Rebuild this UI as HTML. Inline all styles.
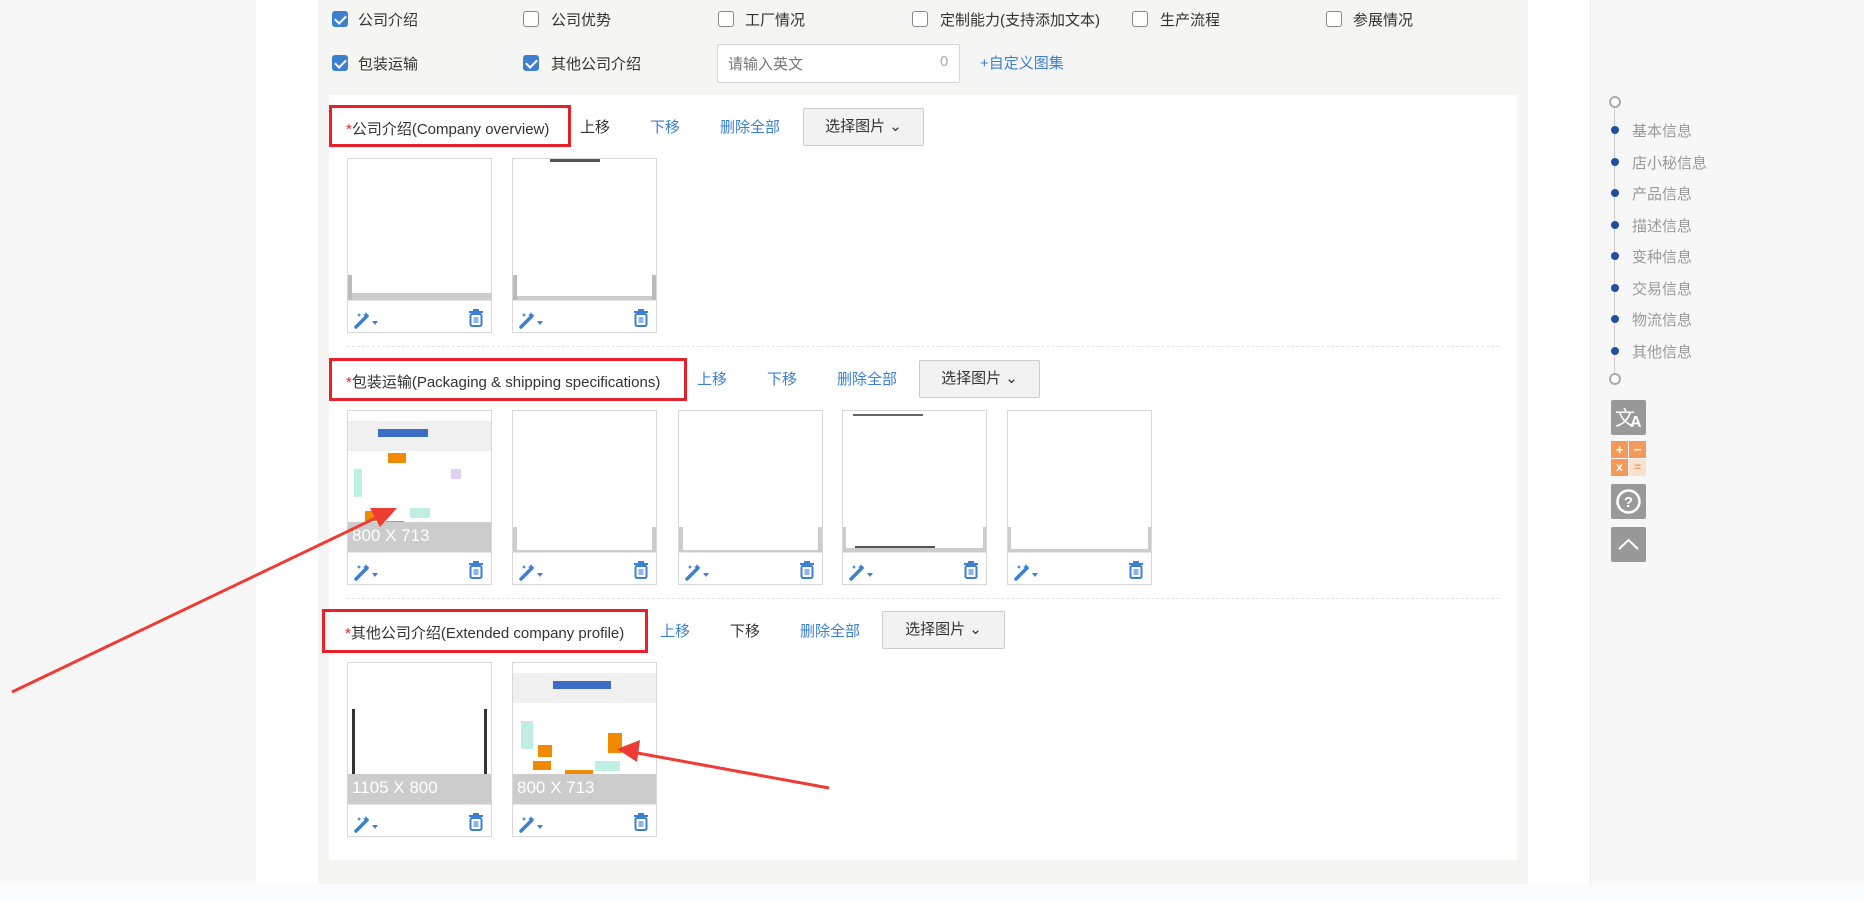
<!DOCTYPE html>
<html><head><meta charset="utf-8"><style>
*{margin:0;padding:0;box-sizing:border-box}
body{width:1864px;height:901px;position:relative;overflow:hidden;background:#f7f7f7;font-family:"Liberation Sans","Noto Sans CJK SC",sans-serif;font-size:15px;color:#333}
.a{position:absolute}
.cb{position:absolute;width:16px;height:16px;border:1px solid #888;border-radius:3px;background:#fff}
.cb.on{background:#3d7fd0;border-color:#3d7fd0}
.cb.on::after{content:"";position:absolute;left:4px;top:1px;width:5px;height:9px;border:solid #fff;border-width:0 2px 2px 0;transform:rotate(45deg)}
.lbl{position:absolute;font-size:15px;color:#333;white-space:nowrap}
.red{position:absolute;border:3px solid #e8202a}
.t{position:absolute;font-size:15px;white-space:nowrap;color:#333}
.blue{color:#3d7fd0}
.btn{position:absolute;border:1px solid #ccc;background:#f2f2f2;font-size:15px;text-align:center;color:#333;border-radius:2px}
.th{position:absolute;width:145px;height:175px;border:1px solid #d8d8d8;background:#fff}
.th .img{position:absolute;left:0;top:0;width:143px;height:141px;background:#fff;overflow:hidden}
.th .bar{position:absolute;left:0;right:0;bottom:0;height:30px;background:#ccc;color:#fff;font-size:17px;padding:4px 4px}
.th .tb{position:absolute;left:0;right:0;bottom:0;height:32px;border-top:1px solid #e6e6e6}
.wand{position:absolute;left:6px;top:8px}
.trash{position:absolute;right:6px;top:7px}
.sep{position:absolute;left:347px;width:1152px;border-top:1px dashed #e4e4e4}
.nav{position:absolute;left:1632px;font-size:15px;color:#999}
.dot{position:absolute;left:1611px;width:8px;height:8px;border-radius:50%;background:#1f4fa0}
.ic{position:absolute;left:1611px;width:35px;height:35px;background:#999;border-radius:2px}
</style></head><body>
<div class="a" style="left:256px;top:0;width:1334px;height:884px;background:#fff"></div>
<div class="a" style="left:318px;top:0;width:1210px;height:884px;background:#f5f5f4"></div>
<div class="a" style="left:1590px;top:0;width:274px;height:884px;background:#f7f7f7;border-left:1px solid #ececec"></div>
<div class="a" style="left:0;top:884px;width:1864px;height:17px;background:#fafbfd"></div>
<div class="a" style="left:329px;top:95px;width:1188px;height:765px;background:#fff"></div>

<!-- checkboxes -->
<div class="cb on" style="left:332px;top:11px"></div><div class="lbl" style="left:358px;top:9px">公司介绍</div>
<div class="cb" style="left:523px;top:11px"></div><div class="lbl" style="left:551px;top:9px">公司优势</div>
<div class="cb" style="left:718px;top:11px"></div><div class="lbl" style="left:745px;top:9px">工厂情况</div>
<div class="cb" style="left:912px;top:11px"></div><div class="lbl" style="left:940px;top:9px">定制能力(支持添加文本)</div>
<div class="cb" style="left:1132px;top:11px"></div><div class="lbl" style="left:1160px;top:9px">生产流程</div>
<div class="cb" style="left:1326px;top:11px"></div><div class="lbl" style="left:1353px;top:9px">参展情况</div>
<div class="cb on" style="left:332px;top:55px"></div><div class="lbl" style="left:358px;top:53px">包装运输</div>
<div class="cb on" style="left:523px;top:55px"></div><div class="lbl" style="left:551px;top:53px">其他公司介绍</div>
<div class="a" style="left:717px;top:44px;width:243px;height:39px;background:#fff;border:1px solid #d6d6d6;border-radius:2px"></div>
<div class="lbl" style="left:728px;top:53px;color:#777">请输入英文</div>
<div class="lbl" style="left:940px;top:53px;color:#aaa">0</div>
<div class="lbl blue" style="left:980px;top:52px">+自定义图集</div>

<!-- section 1 -->
<div class="red" style="left:329px;top:105px;width:242px;height:42px"></div>
<div class="t" style="left:346px;top:118px"><span style="color:#e8202a">*</span>公司介绍(Company overview)</div>
<div class="t" style="left:580px;top:116px">上移</div>
<div class="t blue" style="left:650px;top:116px">下移</div>
<div class="t blue" style="left:720px;top:116px">删除全部</div>
<div class="btn" style="left:803px;top:108px;width:121px;height:38px;line-height:36px">选择图片 ⌄</div>

<!-- section 2 -->
<div class="sep" style="top:346px"></div>
<div class="red" style="left:329px;top:358px;width:358px;height:43px"></div>
<div class="t" style="left:346px;top:371px"><span style="color:#e8202a">*</span>包装运输(Packaging &amp; shipping specifications)</div>
<div class="t blue" style="left:697px;top:368px">上移</div>
<div class="t blue" style="left:767px;top:368px">下移</div>
<div class="t blue" style="left:837px;top:368px">删除全部</div>
<div class="btn" style="left:919px;top:360px;width:121px;height:38px;line-height:36px">选择图片 ⌄</div>

<!-- section 3 -->
<div class="sep" style="top:598px"></div>
<div class="red" style="left:322px;top:609px;width:326px;height:44px"></div>
<div class="t" style="left:345px;top:622px"><span style="color:#e8202a">*</span>其他公司介绍(Extended company profile)</div>
<div class="t blue" style="left:660px;top:620px">上移</div>
<div class="t" style="left:730px;top:620px">下移</div>
<div class="t blue" style="left:800px;top:620px">删除全部</div>
<div class="btn" style="left:882px;top:611px;width:123px;height:38px;line-height:36px">选择图片 ⌄</div>

<svg width="0" height="0" style="position:absolute"><defs>
<g id="w"><path d="M2 18 L13 7" stroke="#3d7fd0" stroke-width="3.5" stroke-linecap="round"/><path d="M12 3l1 2 2 1-2 1-1 2-1-2-2-1 2-1z M5 4l.7 1.3 1.3.7-1.3.7L5 8l-.7-1.3L3 6l1.3-.7z" fill="#3d7fd0"/><path d="M18 12h6l-3 4z" fill="#3d7fd0"/></g>
<g id="tr"><rect x="2" y="3" width="14" height="2" fill="#3d7fd0"/><rect x="6" y="1" width="6" height="2" fill="#3d7fd0"/><rect x="3.5" y="6" width="11" height="12" rx="1.5" fill="none" stroke="#3d7fd0" stroke-width="2"/><rect x="6.5" y="9" width="5" height="6" fill="#8fb5e6"/></g>
</defs></svg>

<!-- thumbnails templates -->
<div id="thumbs"></div>
<script></script>

<div class="th" style="left:347px;top:158px"><div class="img"><div style="position:absolute;left:0;right:0;bottom:0;height:7px;background:#ccc"></div><div style="position:absolute;left:0;bottom:0;width:4px;height:25px;background:#bbb"></div></div><div class="tb"><svg class="wand" width="26" height="20"><use href="#w"/></svg><svg class="trash" width="18" height="20"><use href="#tr"/></svg></div></div>
<div class="th" style="left:512px;top:158px"><div class="img"><div style="position:absolute;left:37px;top:0;width:50px;height:3px;background:#555"></div><div style="position:absolute;left:0;right:0;bottom:0;height:4px;background:#ccc"></div><div style="position:absolute;left:0;bottom:0;width:4px;height:25px;background:#bbb"></div><div style="position:absolute;right:0;bottom:0;width:4px;height:25px;background:#bbb"></div></div><div class="tb"><svg class="wand" width="26" height="20"><use href="#w"/></svg><svg class="trash" width="18" height="20"><use href="#tr"/></svg></div></div>

<div class="th" style="left:347px;top:410px"><div class="img">
<div style="position:absolute;left:0;top:10px;width:143px;height:30px;background:#f0f0f0"></div>
<div style="position:absolute;left:30px;top:18px;width:50px;height:8px;background:#3d6cc8"></div>
<div style="position:absolute;left:40px;top:42px;width:18px;height:10px;background:#f08a00"></div>
<div style="position:absolute;left:6px;top:58px;width:8px;height:28px;background:#bfeee5"></div>
<div style="position:absolute;left:103px;top:58px;width:10px;height:10px;background:#ddd0f5"></div>
<div style="position:absolute;left:17px;top:100px;width:16px;height:10px;background:#f08a00"></div>
<div style="position:absolute;left:38px;top:110px;width:18px;height:10px;background:#f08a00"></div>
<div style="position:absolute;left:62px;top:97px;width:20px;height:10px;background:#bfeee5"></div>
<div class="bar">800 X 713</div></div><div class="tb"><svg class="wand" width="26" height="20"><use href="#w"/></svg><svg class="trash" width="18" height="20"><use href="#tr"/></svg></div></div>
<div class="th" style="left:512px;top:410px"><div class="img"><div style="position:absolute;left:0;right:0;bottom:0;height:2px;background:#ccc"></div><div style="position:absolute;left:0;bottom:0;width:4px;height:25px;background:#ccc"></div><div style="position:absolute;right:0;bottom:0;width:4px;height:25px;background:#ccc"></div></div><div class="tb"><svg class="wand" width="26" height="20"><use href="#w"/></svg><svg class="trash" width="18" height="20"><use href="#tr"/></svg></div></div>
<div class="th" style="left:678px;top:410px"><div class="img"><div style="position:absolute;left:0;right:0;bottom:0;height:2px;background:#ccc"></div><div style="position:absolute;left:0;bottom:0;width:4px;height:25px;background:#ccc"></div><div style="position:absolute;right:0;bottom:0;width:4px;height:25px;background:#ccc"></div></div><div class="tb"><svg class="wand" width="26" height="20"><use href="#w"/></svg><svg class="trash" width="18" height="20"><use href="#tr"/></svg></div></div>
<div class="th" style="left:842px;top:410px"><div class="img"><div style="position:absolute;left:10px;top:3px;width:70px;height:2px;background:#666"></div><div style="position:absolute;left:0;right:0;bottom:0;height:4px;background:#ccc"></div><div style="position:absolute;left:12px;bottom:4px;width:80px;height:2px;background:#555"></div><div style="position:absolute;left:0;bottom:0;width:3px;height:25px;background:#ccc"></div><div style="position:absolute;right:0;bottom:0;width:3px;height:25px;background:#ccc"></div></div><div class="tb"><svg class="wand" width="26" height="20"><use href="#w"/></svg><svg class="trash" width="18" height="20"><use href="#tr"/></svg></div></div>
<div class="th" style="left:1007px;top:410px"><div class="img"><div style="position:absolute;left:0;right:0;bottom:0;height:3px;background:#ccc"></div><div style="position:absolute;left:0;bottom:0;width:3px;height:25px;background:#ccc"></div><div style="position:absolute;right:0;bottom:0;width:3px;height:25px;background:#ccc"></div></div><div class="tb"><svg class="wand" width="26" height="20"><use href="#w"/></svg><svg class="trash" width="18" height="20"><use href="#tr"/></svg></div></div>

<div class="th" style="left:347px;top:662px"><div class="img"><div style="position:absolute;left:4px;top:46px;width:3px;height:70px;background:#333"></div><div style="position:absolute;right:4px;top:46px;width:3px;height:70px;background:#333"></div><div style="position:absolute;left:4px;top:114px;width:135px;height:3px;background:#333"></div><div class="bar">1105 X 800</div></div><div class="tb"><svg class="wand" width="26" height="20"><use href="#w"/></svg><svg class="trash" width="18" height="20"><use href="#tr"/></svg></div></div>
<div class="th" style="left:512px;top:662px"><div class="img">
<div style="position:absolute;left:0;top:10px;width:143px;height:30px;background:#f0f0f0"></div>
<div style="position:absolute;left:40px;top:18px;width:58px;height:8px;background:#3d6cc8"></div>
<div style="position:absolute;left:8px;top:58px;width:12px;height:28px;background:#bfeee5"></div>
<div style="position:absolute;left:25px;top:82px;width:14px;height:12px;background:#f08a00"></div>
<div style="position:absolute;left:20px;top:98px;width:18px;height:9px;background:#f08a00"></div>
<div style="position:absolute;left:52px;top:107px;width:28px;height:10px;background:#f08a00"></div>
<div style="position:absolute;left:95px;top:70px;width:14px;height:20px;background:#f08a00"></div>
<div style="position:absolute;left:82px;top:98px;width:25px;height:10px;background:#bfeee5"></div>
<div class="bar">800 X 713</div></div><div class="tb"><svg class="wand" width="26" height="20"><use href="#w"/></svg><svg class="trash" width="18" height="20"><use href="#tr"/></svg></div></div>

<!-- sidebar -->
<div class="a" style="left:1614px;top:102px;width:1px;height:278px;background:#ccc"></div>
<div class="a" style="left:1609px;top:96px;width:12px;height:12px;border:2px solid #aaa;border-radius:50%;background:#fff"></div>
<div class="a" style="left:1609px;top:373px;width:12px;height:12px;border:2px solid #aaa;border-radius:50%;background:#fff"></div>
<div class="dot" style="top:126px"></div><div class="nav" style="top:120px">基本信息</div>
<div class="dot" style="top:158px"></div><div class="nav" style="top:152px">店小秘信息</div>
<div class="dot" style="top:189px"></div><div class="nav" style="top:183px">产品信息</div>
<div class="dot" style="top:221px"></div><div class="nav" style="top:215px">描述信息</div>
<div class="dot" style="top:252px"></div><div class="nav" style="top:246px">变种信息</div>
<div class="dot" style="top:284px"></div><div class="nav" style="top:278px">交易信息</div>
<div class="dot" style="top:315px"></div><div class="nav" style="top:309px">物流信息</div>
<div class="dot" style="top:347px"></div><div class="nav" style="top:341px">其他信息</div>
<div class="ic" style="top:400px;color:#fff"><span style="position:absolute;left:4px;top:2px;font-size:20px">文</span><span style="position:absolute;left:19px;top:14px;font-size:16px;font-weight:bold">A</span></div>
<div class="a" style="left:1611px;top:441px;width:35px;height:35px">
<div class="a" style="left:0;top:0;width:17px;height:17px;background:#f39a5a;color:#fff;font-size:13px;text-align:center;line-height:17px;font-weight:bold">+</div>
<div class="a" style="left:18px;top:0;width:17px;height:17px;background:#f39a5a;color:#fff;font-size:13px;text-align:center;line-height:17px;font-weight:bold">−</div>
<div class="a" style="left:0;top:18px;width:17px;height:17px;background:#f39a5a;color:#fff;font-size:12px;text-align:center;line-height:17px;font-weight:bold">x</div>
<div class="a" style="left:18px;top:18px;width:17px;height:17px;background:#fbe2cf;color:#f39a5a;font-size:12px;text-align:center;line-height:17px;font-weight:bold">=</div></div>
<div class="ic" style="top:484px"><svg width="35" height="35"><circle cx="17.5" cy="17.5" r="11" fill="none" stroke="#fff" stroke-width="2.5"/><text x="17.5" y="23" text-anchor="middle" font-size="15" font-weight="bold" fill="#fff" font-family="Liberation Sans">?</text></svg></div>
<div class="ic" style="top:527px"><svg width="35" height="35"><path d="M8 22 L17.5 13 L27 22" fill="none" stroke="#fff" stroke-width="2"/></svg></div>

<!-- red arrows -->
<svg class="a" style="left:0;top:0" width="1864" height="901">
<path d="M12 692 L382 515" stroke="#ee3b33" stroke-width="3" fill="none"/>
<path d="M397 508 L370 508 L380 527 Z" fill="#ee3b33"/>
<path d="M829 788 L632 752" stroke="#ee3b33" stroke-width="3" fill="none"/>
<path d="M617 749 L640 740 L637 762 Z" fill="#ee3b33"/>
</svg>
</body></html>
